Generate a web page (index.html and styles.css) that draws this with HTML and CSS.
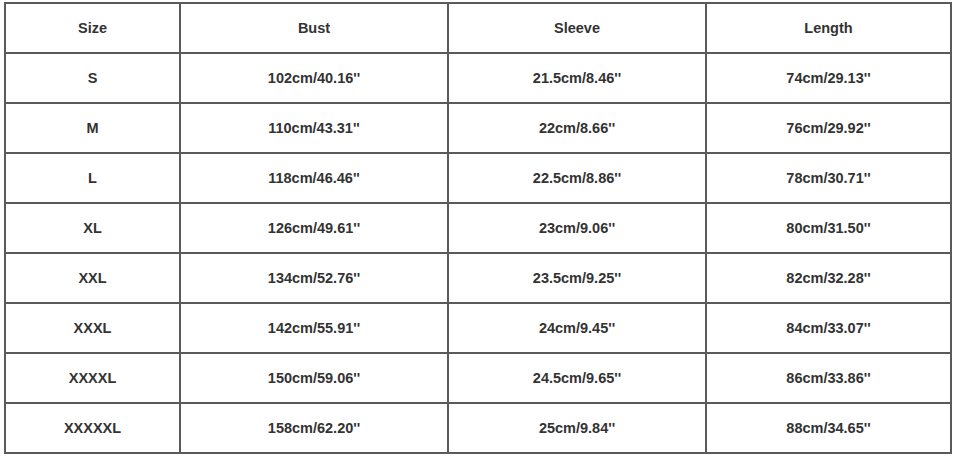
FILE: index.html
```html
<!DOCTYPE html>
<html>
<head>
<meta charset="utf-8">
<link rel="stylesheet" href="styles.css">
</head>
<body>
<table class="size-table">
  <colgroup>
    <col class="c1"><col class="c2"><col class="c3"><col class="c4">
  </colgroup>
  <tr><td>Size</td><td>Bust</td><td>Sleeve</td><td>Length</td></tr>
  <tr><td>S</td><td>102cm/40.16''</td><td>21.5cm/8.46''</td><td>74cm/29.13''</td></tr>
  <tr><td>M</td><td>110cm/43.31''</td><td>22cm/8.66''</td><td>76cm/29.92''</td></tr>
  <tr><td>L</td><td>118cm/46.46''</td><td>22.5cm/8.86''</td><td>78cm/30.71''</td></tr>
  <tr><td>XL</td><td>126cm/49.61''</td><td>23cm/9.06''</td><td>80cm/31.50''</td></tr>
  <tr><td>XXL</td><td>134cm/52.76''</td><td>23.5cm/9.25''</td><td>82cm/32.28''</td></tr>
  <tr><td>XXXL</td><td>142cm/55.91''</td><td>24cm/9.45''</td><td>84cm/33.07''</td></tr>
  <tr><td>XXXXL</td><td>150cm/59.06''</td><td>24.5cm/9.65''</td><td>86cm/33.86''</td></tr>
  <tr><td>XXXXXL</td><td>158cm/62.20''</td><td>25cm/9.84''</td><td>88cm/34.65''</td></tr>
</table>
</body>
</html>
```
FILE: styles.css
```css
html, body {
  margin: 0;
  padding: 0;
  background: #ffffff;
}
body {
  padding: 2px 0 0 4px;
  font-family: "Liberation Sans", Arial, sans-serif;
}
.size-table {
  border-collapse: collapse;
  table-layout: fixed;
  width: 946px;
  color: #333333;
  font-size: 14.5px;
  font-weight: bold;
}
.c1 { width: 175px; }
.c2 { width: 268px; }
.c3 { width: 258px; }
.c4 { width: 245px; }
.size-table td {
  border: 2px solid #5a5a5a;
  height: 50px;
  padding: 0;
  text-align: center;
  vertical-align: middle;
  box-sizing: border-box;
}
```
